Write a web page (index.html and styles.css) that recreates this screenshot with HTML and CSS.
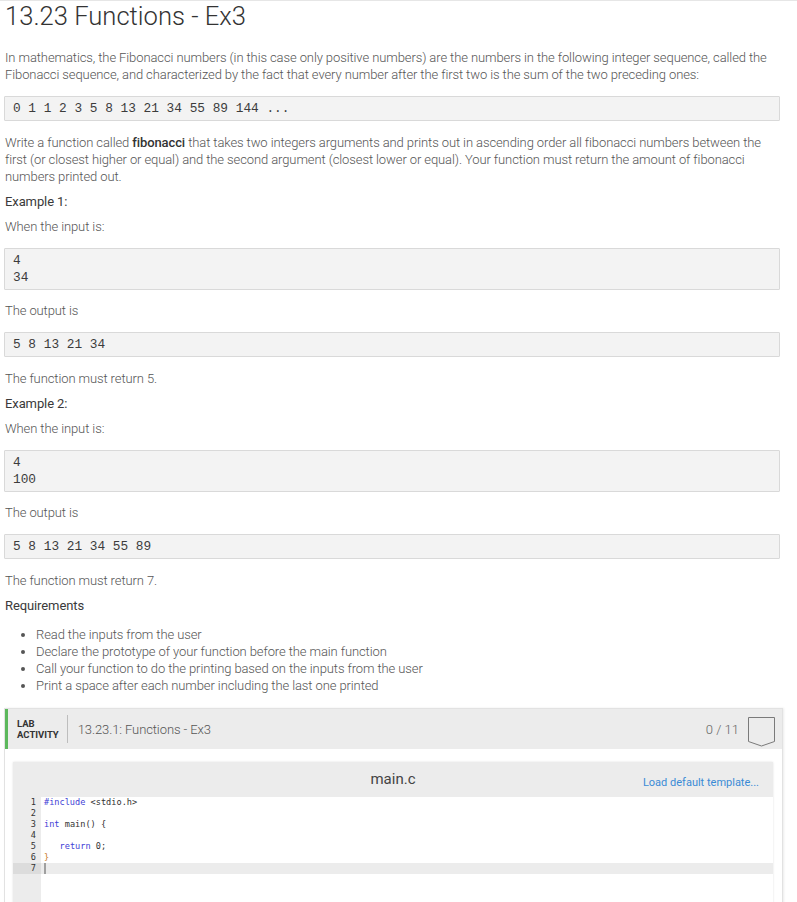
FILE: index.html
```html
<!DOCTYPE html>
<html>
<head>
<meta charset="utf-8">
<link rel="stylesheet" href="styles.css">
</head>
<body>
<div class="page">
  <h1 class="title">13.23 Functions - Ex3</h1>
  <div class="content">
    <p class="text first">In mathematics, the Fibonacci numbers (in this case only positive numbers) are the numbers in the following integer sequence, called the Fibonacci sequence, and characterized by the fact that every number after the first two is the sum of the two preceding ones:</p>
    <pre class="code">0 1 1 2 3 5 8 13 21 34 55 89 144 ...</pre>
    <p class="text">Write a function called <strong>fibonacci</strong> that takes two integers arguments and prints out in ascending order all fibonacci numbers between the first (or closest higher or equal) and the second argument (closest lower or equal). Your function must return the amount of fibonacci numbers printed out.</p>
    <p class="label tight">Example 1:</p>
    <p class="text tight">When the input is:</p>
    <pre class="code">4
34</pre>
    <p class="text after-box">The output is</p>
    <pre class="code">5 8 13 21 34</pre>
    <p class="text">The function must return 5.</p>
    <p class="label tight">Example 2:</p>
    <p class="text tight">When the input is:</p>
    <pre class="code">4
100</pre>
    <p class="text after-box">The output is</p>
    <pre class="code">5 8 13 21 34 55 89</pre>
    <p class="text">The function must return 7.</p>
    <p class="label tight">Requirements</p>
    <ul class="reqs">
      <li>Read the inputs from the user</li>
      <li>Declare the prototype of your function before the main function</li>
      <li>Call your function to do the printing based on the inputs from the user</li>
      <li>Print a space after each number including the last one printed</li>
    </ul>

    <div class="lab">
      <div class="lab-bar">
        <div class="lab-tag">LAB<br>ACTIVITY</div>
        <div class="lab-title">13.23.1: Functions - Ex3</div>
        <div class="lab-score">0 / 11</div>
        <svg class="lab-badge" width="28" height="30" viewBox="0 0 28 30">
          <polygon points="0.5,0.5 26.5,0.5 26.5,24.5 13.5,29 0.5,24.5" fill="none" stroke="#7a7a7a" stroke-width="1"/>
        </svg>
      </div>
      <div class="lab-body">
        <div class="editor">
          <div class="editor-head">
            <span class="file">main.c</span>
            <span class="load">Load default template...</span>
          </div>
          <div class="editor-code">
            <div class="gutter">
              <div class="ln">1</div>
              <div class="ln">2</div>
              <div class="ln">3</div>
              <div class="ln">4</div>
              <div class="ln">5</div>
              <div class="ln">6</div>
              <div class="ln active">7</div>
            </div>
            <div class="lines">
              <div class="line"><span class="kw">#include</span> <span class="inc">&lt;stdio.h&gt;</span></div>
              <div class="line"></div>
              <div class="line"><span class="kw">int</span> main() {</div>
              <div class="line"></div>
              <div class="line">   <span class="kw">return</span> 0;</div>
              <div class="line"><span class="brace">}</span></div>
              <div class="line active"><span class="cursor"></span></div>
            </div>
          </div>
        </div>
      </div>
    </div>
  </div>
</div>
</body>
</html>
```

FILE: styles.css
```css
html, body {
  margin: 0;
  padding: 0;
  height: 902px;
  overflow: hidden;
  background: #ffffff;
}
body {
  border-top: 1px solid #e6e6e6;
  font-family: Roboto, "Liberation Sans", sans-serif;
}
.page {
  width: 776px;
  margin-left: 4px;
}
.title {
  margin: 0;
  font-size: 25.6px;
  line-height: 31px;
  font-weight: 300;
  color: #333333;
  padding-left: 1px;
}
.content {
  display: flex;
  flex-direction: column;
}
.content > * {
  margin: 13px 0 0 0;
}
.content > .first {
  margin-top: 17px;
}
.content > .tight {
  margin-top: 8px;
}
.content > .after-box {
  margin-top: 12px;
}
.text {
  font-size: 13px;
  line-height: 17px;
  letter-spacing: -0.1px;
  font-weight: 300;
  color: #555555;
  padding-left: 1px;
}
.text strong {
  font-weight: 500;
  color: #333333;
}
.label {
  font-size: 13px;
  line-height: 17px;
  letter-spacing: -0.1px;
  font-weight: 400;
  color: #3a3a3a;
  padding-left: 1px;
}
.code {
  font-family: "Liberation Mono", "Courier New", monospace;
  font-size: 12.8px;
  line-height: 17px;
  color: #3c3c3c;
  background: #f3f3f3;
  border: 1px solid #d9d9d9;
  border-radius: 1px;
  padding: 3px 8px;
  white-space: pre;
}
.reqs {
  margin-top: 12px !important;
  padding-left: 32px;
  font-size: 13px;
  line-height: 17px;
  letter-spacing: -0.1px;
  font-weight: 300;
  color: #555555;
}

.lab {
  margin-top: 14px !important;
  width: 777px;
  border: 1px solid #e2e2e2;
  border-bottom: none;
  box-shadow: 1px 0 2px rgba(0, 0, 0, 0.08);
  background: #ffffff;
}
.lab-bar {
  display: flex;
  align-items: center;
  height: 40px;
  background: #ececec;
  border-left: 3px solid #5cb85c;
  padding: 0 6px 0 9px;
}
.lab-tag {
  font-size: 9.5px;
  line-height: 11.5px;
  font-weight: 700;
  color: #333333;
  padding-right: 8px;
  border-right: 1px solid #bdbdbd;
  height: 28px;
  display: flex;
  align-items: center;
}
.lab-title {
  flex: 1;
  margin-left: 10px;
  font-size: 13px;
  letter-spacing: -0.1px;
  font-weight: 300;
  color: #555555;
}
.lab-score {
  font-size: 13px;
  font-weight: 300;
  color: #666666;
  margin-right: 9px;
}
.lab-badge {
  display: block;
  margin-top: 5px;
}
.lab-body {
  padding: 13px 9px 0 8px;
}
.editor {
  box-shadow: 0 0 2px rgba(0, 0, 0, 0.12);
  background: #ffffff;
}
.editor-head {
  position: relative;
  height: 35px;
  background: #ececec;
  display: flex;
  align-items: center;
  justify-content: center;
}
.file {
  font-size: 15px;
  font-weight: 400;
  color: #444444;
  margin-top: -1px;
}
.load {
  position: absolute;
  right: 14px;
  top: 14px;
  font-size: 11px;
  color: #3a8bd6;
}
.editor-code {
  display: flex;
  height: 120px;
  font-family: "DejaVu Sans Mono", monospace;
  font-size: 8.6px;
  line-height: 11px;
}
.gutter {
  width: 28px;
  background: #ececec;
  color: #333333;
  text-align: right;
}
.ln {
  height: 11px;
  padding-right: 5px;
}
.ln.active {
  background: #dcdcdc;
}
.lines {
  flex: 1;
  color: #333333;
}
.line {
  height: 11px;
  padding-left: 3px;
  white-space: pre;
}
.line.active {
  background: #ececec;
}
.kw {
  color: #3f3fd6;
}
.inc {
  color: #333333;
}
.brace {
  color: #c87a25;
}
.cursor {
  display: inline-block;
  width: 2px;
  height: 11px;
  background: #a0a0a0;
  vertical-align: top;
}
```
